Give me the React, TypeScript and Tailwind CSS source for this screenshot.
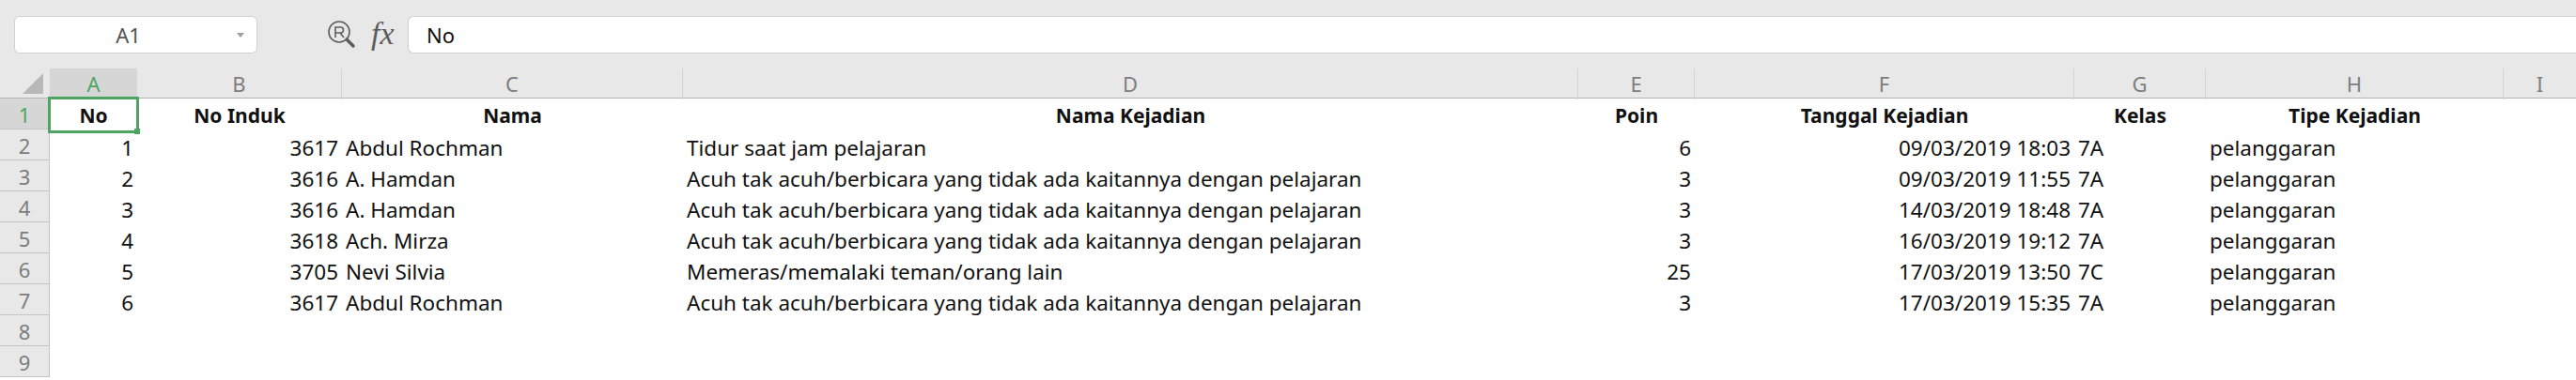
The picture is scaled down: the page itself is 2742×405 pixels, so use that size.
const columns = ["A", "B", "C", "D", "E", "F", "G", "H", "I"];

const headers = ["No", "No Induk", "Nama", "Nama Kejadian", "Poin", "Tanggal Kejadian", "Kelas", "Tipe Kejadian"];

const rows = [
  ["1", "3617", "Abdul Rochman", "Tidur saat jam pelajaran", "6", "09/03/2019 18:03", "7A", "pelanggaran"],
  ["2", "3616", "A. Hamdan", "Acuh tak acuh/berbicara yang tidak ada kaitannya dengan pelajaran", "3", "09/03/2019 11:55", "7A", "pelanggaran"],
  ["3", "3616", "A. Hamdan", "Acuh tak acuh/berbicara yang tidak ada kaitannya dengan pelajaran", "3", "14/03/2019 18:48", "7A", "pelanggaran"],
  ["4", "3618", "Ach. Mirza", "Acuh tak acuh/berbicara yang tidak ada kaitannya dengan pelajaran", "3", "16/03/2019 19:12", "7A", "pelanggaran"],
  ["5", "3705", "Nevi Silvia", "Memeras/memalaki teman/orang lain", "25", "17/03/2019 13:50", "7C", "pelanggaran"],
  ["6", "3617", "Abdul Rochman", "Acuh tak acuh/berbicara yang tidak ada kaitannya dengan pelajaran", "3", "17/03/2019 15:35", "7A", "pelanggaran"],
];

const gridCols = "grid grid-cols-[53px_93px_218px_363px_953px_124px_404px_140px_317px_1fr]";

// text columns are left aligned, numbers and dates go right
const rightAligned = [0, 1, 4, 5];

const RowHeader = ({ n, active }: { n: number; active?: boolean }) => (
  <div
    className={`flex h-[33px] items-center justify-center border-r border-b border-[#c4c4c4] pt-[2px] text-[22px] ${
      active ? "bg-[#d6d6d6] text-[#4ea562]" : "bg-[#e8e8e8] text-[#7d7d7d]"
    }`}
  >
    {n}
  </div>
);

const App = () => {
  return (
    <div className="h-[405px] w-[2742px] overflow-hidden bg-white font-['Noto_Sans',sans-serif] text-[#111]">
      {/* Formula bar */}
      <div className="flex h-[72px] items-start bg-[#e8e8e8] pt-[17px] pl-[15px]">
        <div className="relative flex h-[40px] w-[259px] items-center justify-center rounded-md border border-[#d0d0d0] bg-white pr-[16px] text-[22px] text-[#555]">
          A1
          <span className="absolute top-[17px] right-[13px] h-0 w-0 border-x-[4px] border-t-[5px] border-x-transparent border-t-[#a0a0a0]" />
        </div>
        <svg className="mt-[5px] ml-[74px]" width="32" height="30" viewBox="0 0 32 30" fill="none" stroke="#5c5c5c" strokeWidth="1.6">
          <circle cx="13" cy="12" r="11" />
          <path d="M9 18V7h5.5a3 3 0 0 1 0 6H9M14 13l4 5" />
          <path d="M21 20l7 7" strokeWidth="3.4" strokeLinecap="round" />
        </svg>
        <span className="mt-[1px] ml-[15px] w-[29px] font-['Liberation_Serif',serif] text-[34px] leading-[36px] text-[#5c5c5c] italic">fx</span>
        <div className="ml-[10px] flex h-[40px] flex-1 items-center rounded-l-md border border-r-0 border-[#d0d0d0] bg-white pl-[19px] text-[22px]">
          No
        </div>
      </div>

      {/* Column letters */}
      <div className={`${gridCols} h-[33px] border-b border-[#b4b4b4] bg-[#e8e8e8] pt-[1px] text-[22px] text-[#7d7d7d]`}>
        <div className="relative">
          <span className="absolute right-[7px] bottom-[6px] h-0 w-0 border-b-[22px] border-l-[22px] border-b-[#b8b8b8] border-l-transparent" />
        </div>
        {columns.map((c, i) => (
          <div
            key={c}
            className={`flex items-center justify-center ${
              i === 0 ? "bg-[#d6d6d6] text-[#4ea562]" : "border-r border-[#d2d2d2]"
            } ${i === 8 ? "border-r-0" : ""}`}
          >
            {c}
          </div>
        ))}
      </div>

      {/* Sheet */}
      <div className="grid grid-cols-[53px_1fr]">
        <div>
          <RowHeader n={1} active />
          {[2, 3, 4, 5, 6, 7, 8, 9].map((n) => (
            <RowHeader key={n} n={n} />
          ))}
        </div>
        <div>
          <div className="grid h-[33px] grid-cols-[93px_218px_363px_953px_124px_404px_140px_317px_1fr] text-[21px] font-bold">
            {headers.map((h, i) => (
              <div key={h} className={`relative flex items-center justify-center pt-[3px] whitespace-nowrap ${i === 0 ? "outline-[3px] -outline-offset-1 outline-[#4ea562]" : ""}`}>
                {h}
                {i === 0 && <span className="absolute -right-[3px] -bottom-[3px] h-[6px] w-[6px] bg-[#4ea562]" />}
              </div>
            ))}
          </div>
          {rows.map((row) => (
            <div key={row[0]} className="grid h-[33px] grid-cols-[93px_218px_363px_953px_124px_404px_140px_317px_1fr] text-[22.5px]">
              {row.map((value, i) => (
                <div
                  key={i}
                  className={`flex items-center px-[4px] pt-[3px] whitespace-nowrap ${rightAligned.includes(i) ? "justify-end" : ""}`}
                >
                  {value}
                </div>
              ))}
            </div>
          ))}
        </div>
      </div>
    </div>
  );
};

export default App;
